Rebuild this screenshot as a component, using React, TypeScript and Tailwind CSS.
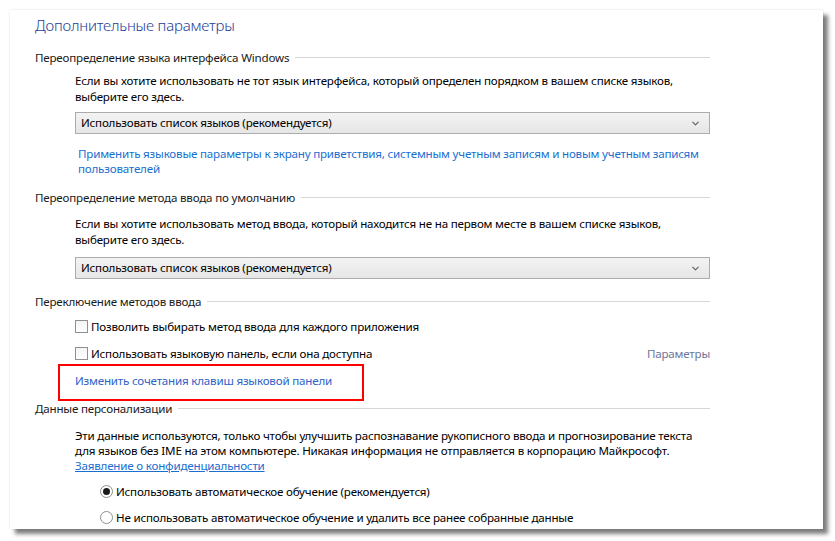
import { ChevronDown } from 'lucide-react';

const font = { fontFamily: '"Noto Sans", "Open Sans", "Liberation Sans", sans-serif' };

function SectionHeader({ title, className = '' }: { title: string; className?: string }) {
  return (
    <div className={`flex items-center h-[17px] leading-[17px] text-[11.6px] tracking-[-0.2px] text-[#1a1a1a] ${className}`}>
      <span className="whitespace-nowrap">{title}</span>
      <div className="flex-1 h-px bg-[#d6d6d6] ml-[6px]" />
    </div>
  );
}

function Dropdown({ value, className = '' }: { value: string; className?: string }) {
  return (
    <div
      className={`flex items-center justify-between h-[22px] border border-[#acacac] bg-gradient-to-b from-[#f3f3f3] to-[#e6e6e6] pl-[5px] pr-[8px] text-[11.6px] tracking-[-0.2px] text-black ${className}`}
    >
      <span>{value}</span>
      <ChevronDown size={11} strokeWidth={2.5} className="text-[#606060]" />
    </div>
  );
}

function Checkbox({ label }: { label: string }) {
  return (
    <div className="flex items-center h-[17px] leading-[17px] text-[11.6px] tracking-[-0.2px] text-black whitespace-nowrap">
      <span className="w-[13px] h-[13px] border border-[#8f8f8f] bg-gradient-to-b from-[#f4f4f4] to-white mr-[3px]" />
      <span>{label}</span>
    </div>
  );
}

function Radio({ label, checked }: { label: string; checked?: boolean }) {
  return (
    <div className="flex items-center h-[17px] leading-[17px] text-[11.6px] tracking-[-0.2px] text-black whitespace-nowrap">
      <span className="w-[13px] h-[13px] rounded-full border border-[#8f8f8f] bg-white flex items-center justify-center mr-[3px]">
        {checked && <span className="w-[7px] h-[7px] rounded-full bg-[#1a1a1a]" />}
      </span>
      <span>{label}</span>
    </div>
  );
}

export default function App() {
  return (
    <div className="w-[835px] h-[541px] bg-white p-[10px] overflow-hidden" style={font}>
      <div className="w-[813px] h-[519px] bg-white shadow-[5px_5px_4px_rgba(0,0,0,0.5),0_0_2px_rgba(0,0,0,0.12)] pl-[25px]">
        <div className="w-[675px]">
          {/* Title */}
          <div className="h-[30px] leading-[30px] text-[15px] tracking-[-0.2px] font-light text-[#1f3c99]">
            Дополнительные параметры
          </div>

          {/* Section 1 */}
          <SectionHeader title="Переопределение языка интерфейса Windows" className="mt-[9px]" />
          <div className="pl-[40px] text-[11.6px] tracking-[-0.2px]">
            <p className="mt-[7px] leading-[16px] text-black whitespace-nowrap">
              Если вы хотите использовать не тот язык интерфейса, который определен порядком в вашем списке языков,
              <br />
              выберите его здесь.
            </p>
            <Dropdown value="Использовать список языков (рекомендуется)" className="mt-[7px]" />
            <p className="mt-[12px] pl-[3px] leading-[15px] text-[#1a6fd1] whitespace-nowrap">
              Применить языковые параметры к экрану приветствия, системным учетным записям и новым учетным записям
              <br />
              пользователей
            </p>
          </div>

          {/* Section 2 */}
          <SectionHeader title="Переопределение метода ввода по умолчанию" className="mt-[13px]" />
          <div className="pl-[40px] text-[11.6px] tracking-[-0.2px]">
            <p className="mt-[10px] leading-[16px] text-black whitespace-nowrap">
              Если вы хотите использовать метод ввода, который находится не на первом месте в вашем списке языков,
              <br />
              выберите его здесь.
            </p>
            <Dropdown value="Использовать список языков (рекомендуется)" className="mt-[9px]" />
          </div>

          {/* Section 3 */}
          <SectionHeader title="Переключение методов ввода" className="mt-[14px]" />
          <div className="pl-[40px] text-[11.6px] tracking-[-0.2px]">
            <div className="mt-[8px]">
              <Checkbox label="Позволить выбирать метод ввода для каждого приложения" />
            </div>
            <div className="mt-[10px] flex items-center justify-between">
              <Checkbox label="Использовать языковую панель, если она доступна" />
              <span className="leading-[17px] text-[#6f7598]">Параметры</span>
            </div>
            <div className="relative mt-[10px] h-[17px] leading-[17px] text-[#2d63c8]">
              Изменить сочетания клавиш языковой панели
              <div className="absolute left-[-17px] top-[-8px] w-[306px] h-[37px] border-2 border-[#ff0000]" />
            </div>
          </div>

          {/* Section 4 */}
          <SectionHeader title="Данные персонализации" className="mt-[11px]" />
          <div className="pl-[40px] text-[11.6px] tracking-[-0.2px]">
            <p className="mt-[11px] leading-[15px] text-black whitespace-nowrap">
              Эти данные используются, только чтобы улучшить распознавание рукописного ввода и прогнозирование текста
              <br />
              для языков без IME на этом компьютере. Никакая информация не отправляется в корпорацию Майкрософт.
              <br />
              <span className="text-[#1a6fd1] underline">Заявление о конфиденциальности</span>
            </p>
            <div className="pl-[25px]">
              <div className="mt-[10px]">
                <Radio label="Использовать автоматическое обучение (рекомендуется)" checked />
              </div>
              <div className="mt-[9px]">
                <Radio label="Не использовать автоматическое обучение и удалить все ранее собранные данные" />
              </div>
            </div>
          </div>
        </div>
      </div>
    </div>
  );
}
